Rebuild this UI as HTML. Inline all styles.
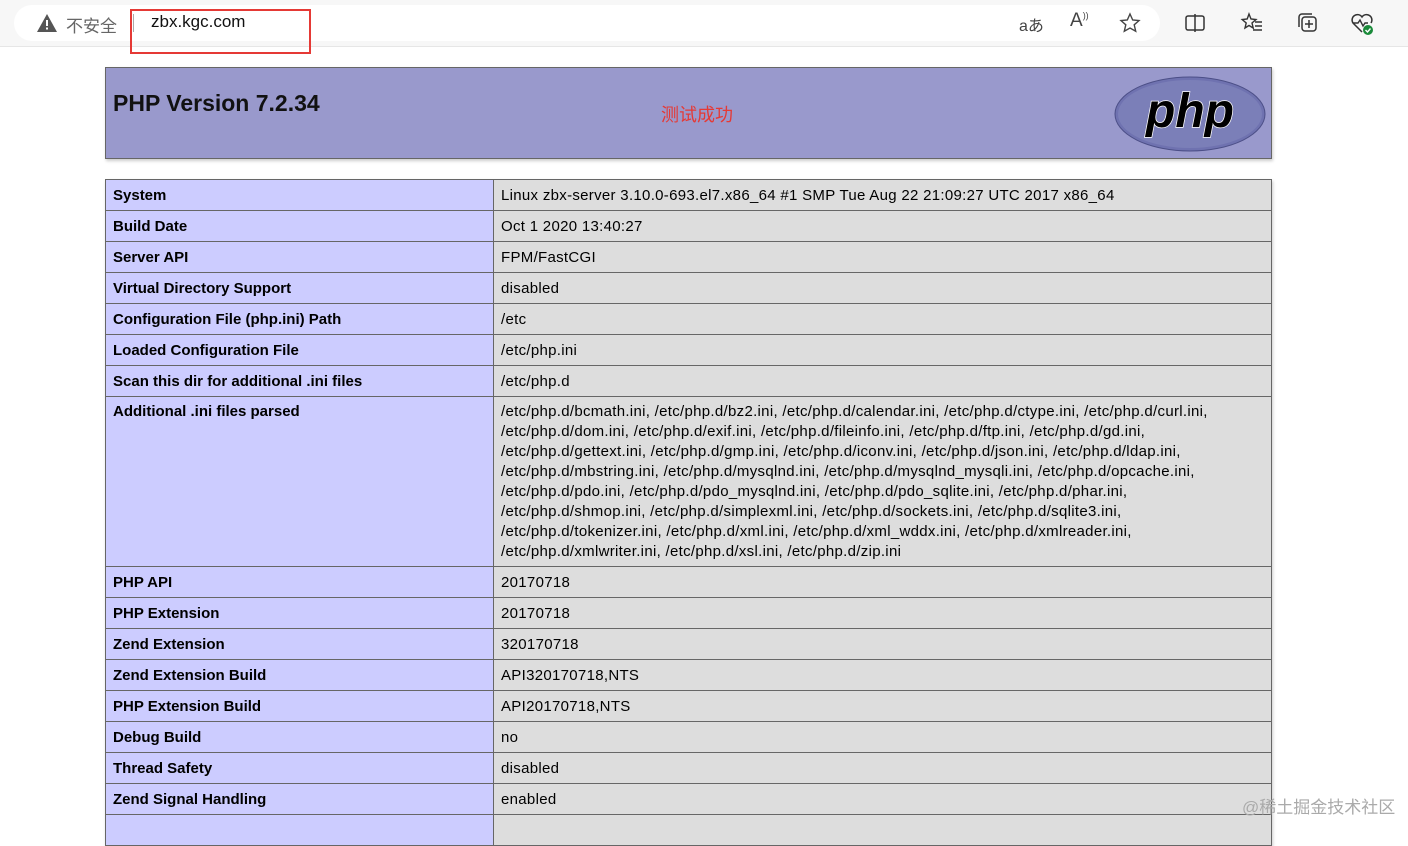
<!DOCTYPE html>
<html><head><meta charset="utf-8"><style>
body{margin:0;width:1408px;height:822px;overflow:hidden;background:#fff;font-family:"Liberation Sans","Noto Sans CJK SC",sans-serif;position:relative}
.bar{position:absolute;left:0;top:0;width:1408px;height:46px;background:#f7f7f7;border-bottom:1px solid #e6e6e6}
.pill{position:absolute;left:14px;top:5px;width:1146px;height:36px;background:#fff;border-radius:18px}
.hdr{position:absolute;left:105px;top:67px;width:1165px;height:90px;background:#9999cc;border:1px solid #666;box-shadow:1px 2px 3px #ccc}
table{position:absolute;left:105px;top:179px;border-collapse:collapse;width:1167px;font-size:15px;box-shadow:1px 2px 3px #ccc}
td{border:1px solid #666;height:31px;padding:1px 7px 0;vertical-align:middle;color:#000;white-space:nowrap;box-sizing:border-box;line-height:20px}
td.e{background:#ccccff;font-weight:bold;width:388px}
td.v{background:#dddddd;letter-spacing:0.3px}
tr.tall td{vertical-align:top;padding-top:5px;height:170px}
</style></head><body>
<div class="bar"><div class="pill"></div>
<svg style="position:absolute;left:36px;top:13px" width="22" height="20" viewBox="0 0 22 20"><path d="M11 1L21 19H1Z" fill="#555"/><rect x="10" y="7" width="2" height="6" fill="#fff"/><rect x="10" y="14.5" width="2" height="2" fill="#fff"/></svg>
<span style="position:absolute;left:66px;top:12px;font-size:17px;color:#666">不安全</span>
<div style="position:absolute;left:133px;top:14px;width:1px;height:18px;background:#aaa"></div>
<span style="position:absolute;left:151px;top:12px;font-size:17px;color:#111">zbx.kgc.com</span>
<div style="position:absolute;left:130px;top:9px;width:181px;height:45px;border:2px solid #e53935;box-sizing:border-box"></div>
<span style="position:absolute;left:1019px;top:12px;font-size:16px;color:#444">aあ</span>
<span style="position:absolute;left:1070px;top:10px;font-size:19px;color:#444">A<sup style="font-size:9px">))</sup></span>
<svg style="position:absolute;left:1119px;top:12px" width="22" height="22" viewBox="0 0 22 22"><path d="M11 2l2.7 6 6.3.6-4.8 4.2 1.5 6.4L11 16l-5.7 3.2 1.5-6.4L2 8.6l6.3-.6z" fill="none" stroke="#444" stroke-width="1.4"/></svg>
<svg style="position:absolute;left:1184px;top:12px" width="22" height="22" viewBox="0 0 22 22"><rect x="2" y="4" width="18" height="14" rx="2" fill="none" stroke="#333" stroke-width="1.5"/><path d="M11 2v18" stroke="#333" stroke-width="1.5"/></svg>
<svg style="position:absolute;left:1240px;top:12px" width="24" height="22" viewBox="0 0 24 22"><path d="M9 2l2 5 5 .5-4 3.5 1.2 5L9 13.5 5 16l1.2-5-4-3.5 5-.5z" fill="none" stroke="#333" stroke-width="1.4"/><path d="M15 10h7M15 14h7M13 18h9" stroke="#333" stroke-width="1.4"/></svg>
<svg style="position:absolute;left:1296px;top:11px" width="24" height="24" viewBox="0 0 24 24"><rect x="6" y="6" width="14" height="14" rx="3" fill="none" stroke="#333" stroke-width="1.5"/><path d="M3 16V6a3 3 0 013-3h10M13 9v8M9 13h8" fill="none" stroke="#333" stroke-width="1.5"/></svg>
<svg style="position:absolute;left:1350px;top:12px" width="26" height="24" viewBox="0 0 26 24"><path d="M12 20L3 11a5 5 0 019-6 5 5 0 019 6" fill="none" stroke="#333" stroke-width="1.5"/><path d="M3 11h5l2-3 3 6 2-3h3" fill="none" stroke="#333" stroke-width="1.4"/><circle cx="18" cy="18" r="5" fill="#1a8a3a"/><path d="M15.5 18l2 2 3-3.5" stroke="#fff" stroke-width="1.4" fill="none"/></svg>
</div>
<div class="hdr">
<div style="position:absolute;left:7px;top:22px;font-size:23px;font-weight:bold;color:#111">PHP Version 7.2.34</div>
<div style="position:absolute;left:555px;top:33px;font-size:18px;color:#e53935">测试成功</div>
<svg style="position:absolute;left:1007px;top:7px" width="154" height="78" viewBox="0 0 154 78"><ellipse cx="77" cy="39" rx="75" ry="37" fill="#6f72b0" stroke="#4c4f87" stroke-width="1"/><ellipse cx="77" cy="39" rx="72" ry="34" fill="#7b7fb8"/><text x="77" y="52" text-anchor="middle" font-family="Liberation Sans,sans-serif" font-weight="bold" font-style="italic" font-size="48" fill="#000" stroke="#fff" stroke-width="1.5" paint-order="stroke">php</text></svg>
</div>
<table>
<tr><td class="e">System</td><td class="v">Linux zbx-server 3.10.0-693.el7.x86_64 #1 SMP Tue Aug 22 21:09:27 UTC 2017 x86_64</td></tr>
<tr><td class="e">Build Date</td><td class="v">Oct 1 2020 13:40:27</td></tr>
<tr><td class="e">Server API</td><td class="v">FPM/FastCGI</td></tr>
<tr><td class="e">Virtual Directory Support</td><td class="v">disabled</td></tr>
<tr><td class="e">Configuration File (php.ini) Path</td><td class="v">/etc</td></tr>
<tr><td class="e">Loaded Configuration File</td><td class="v">/etc/php.ini</td></tr>
<tr><td class="e">Scan this dir for additional .ini files</td><td class="v">/etc/php.d</td></tr>
<tr class="tall"><td class="e">Additional .ini files parsed</td><td class="v">/etc/php.d/bcmath.ini, /etc/php.d/bz2.ini, /etc/php.d/calendar.ini, /etc/php.d/ctype.ini, /etc/php.d/curl.ini,<br>/etc/php.d/dom.ini, /etc/php.d/exif.ini, /etc/php.d/fileinfo.ini, /etc/php.d/ftp.ini, /etc/php.d/gd.ini,<br>/etc/php.d/gettext.ini, /etc/php.d/gmp.ini, /etc/php.d/iconv.ini, /etc/php.d/json.ini, /etc/php.d/ldap.ini,<br>/etc/php.d/mbstring.ini, /etc/php.d/mysqlnd.ini, /etc/php.d/mysqlnd_mysqli.ini, /etc/php.d/opcache.ini,<br>/etc/php.d/pdo.ini, /etc/php.d/pdo_mysqlnd.ini, /etc/php.d/pdo_sqlite.ini, /etc/php.d/phar.ini,<br>/etc/php.d/shmop.ini, /etc/php.d/simplexml.ini, /etc/php.d/sockets.ini, /etc/php.d/sqlite3.ini,<br>/etc/php.d/tokenizer.ini, /etc/php.d/xml.ini, /etc/php.d/xml_wddx.ini, /etc/php.d/xmlreader.ini,<br>/etc/php.d/xmlwriter.ini, /etc/php.d/xsl.ini, /etc/php.d/zip.ini</td></tr>
<tr><td class="e">PHP API</td><td class="v">20170718</td></tr>
<tr><td class="e">PHP Extension</td><td class="v">20170718</td></tr>
<tr><td class="e">Zend Extension</td><td class="v">320170718</td></tr>
<tr><td class="e">Zend Extension Build</td><td class="v">API320170718,NTS</td></tr>
<tr><td class="e">PHP Extension Build</td><td class="v">API20170718,NTS</td></tr>
<tr><td class="e">Debug Build</td><td class="v">no</td></tr>
<tr><td class="e">Thread Safety</td><td class="v">disabled</td></tr>
<tr><td class="e">Zend Signal Handling</td><td class="v">enabled</td></tr>
<tr><td class="e">&nbsp;</td><td class="v">&nbsp;</td></tr>
</table>
<div style="position:absolute;left:1242px;top:793px;font-size:17px;color:#aaa">@稀土掘金技术社区</div>
</body></html>
